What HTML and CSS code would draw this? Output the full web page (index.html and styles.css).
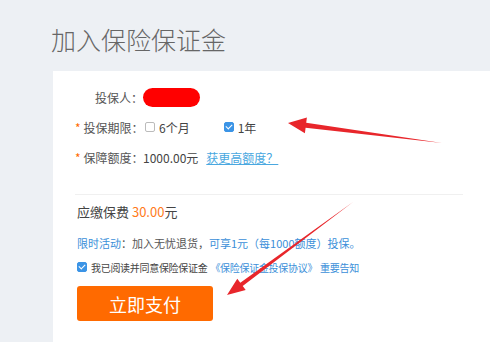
FILE: index.html
```html
<!DOCTYPE html>
<html lang="zh-CN">
  <head>
    <meta charset="UTF-8" />
    <title>加入保险保证金</title>
    <link rel="stylesheet" href="styles.css">
  </head>
  <body>
    <div class="page">
      <h1 class="title">加入保险保证金</h1>
      <div class="card">
        <div class="form-row">
          <span class="label">投保人：</span>
          <span class="masked"></span>
        </div>
        <div class="form-row">
          <span class="label"><i class="req">*</i>投保期限：</span>
          <span class="check"></span>
          <span class="opt">6个月</span>
          <span class="check checked gap"></span>
          <span class="opt">1年</span>
        </div>
        <div class="form-row">
          <span class="label"><i class="req">*</i>保障额度：</span>
          <span class="value">1000.00元</span>
          <a class="more-link" href="#">获更高额度？</a>
        </div>

        <div class="divider"></div>

        <div class="fee">应缴保费 <span class="price">30.00</span>元</div>
        <div class="promo">
          <span class="blue">限时活动</span>：加入无忧退货，<span class="blue">可享1元（每1000额度）投保。</span>
        </div>
        <div class="agree">
          <span class="check checked"></span>
          <span>我已阅读并同意保险保证金</span>
          <a class="blue" href="#">《保险保证金投保协议》</a>
          <a class="blue" href="#">重要告知</a>
        </div>
        <button class="pay-button">立即支付</button>
      </div>
    </div>

    <!-- annotation arrows on top of the screenshot -->
    <svg class="marks" width="490" height="342" viewBox="0 0 490 342">
      <polygon points="288,123 306.9,117.4 306.2,122.8 442,143 305.6,127.8 304.9,133.2" />
      <polygon points="227,295 245.7,289.9 242.7,285.9 353,202 240.3,282.7 237.3,278.7" />
    </svg>
  </body>
</html>
```

FILE: styles.css
```css
body {
  margin: 0;
  background-color: #edf0f4;
  font-family: "Noto Sans CJK SC", "Noto Sans", sans-serif;
  color: #555;
  overflow: hidden;
}

.page {
  padding-left: 53px;
}

.title {
  margin: 0 0 0 -2px;
  padding-top: 23px;
  height: 71px;
  box-sizing: border-box;
  font-size: 25px;
  line-height: 32px;
  font-weight: 300;
  color: #666;
}

.card {
  background-color: white;
  padding: 11px 27px 0 22px;
  min-height: 271px;
  box-sizing: border-box;
}

.form-row {
  display: flex;
  align-items: center;
  height: 30px;
  font-size: 12px;
  white-space: nowrap;
}

.label {
  width: 68px;
  flex-shrink: 0;
  text-align: right;
  color: #555;
}

.req {
  font-style: normal;
  color: #ff6a00;
  margin-right: 3px;
}

.masked {
  display: inline-block;
  width: 57px;
  height: 19px;
  border-radius: 10px;
  background-color: #f00;
}

.check {
  display: inline-block;
  width: 8px;
  height: 8px;
  border: 1px solid #bbb;
  border-radius: 2px;
  margin: 0 4px 0 2px;
  position: relative;
  flex-shrink: 0;
}

.check.checked {
  background-color: #3b94e6;
  border-color: #3b94e6;
}

.check.checked::after {
  content: "";
  position: absolute;
  left: 2px;
  top: 0px;
  width: 3px;
  height: 5px;
  border: solid white;
  border-width: 0 1.5px 1.5px 0;
  transform: rotate(45deg);
}

.check.gap {
  margin-left: 34px;
}

.opt,
.value {
  color: #444;
}

.more-link {
  margin-left: 8px;
  color: #4aa8e0;
  text-decoration: underline;
}

.divider {
  height: 1px;
  background-color: #f0f0f0;
  margin: 22px 0 7px 0;
}

.fee {
  font-size: 13px;
  line-height: 20px;
  color: #444;
  padding: 0 2px;
}

.price {
  color: #ff7a1a;
}

.promo {
  margin-top: 11px;
  font-size: 11px;
  line-height: 20px;
  color: #555;
  padding: 0 2px;
  white-space: nowrap;
}

.blue {
  color: #3b8fd9;
  text-decoration: none;
}

.agree {
  display: flex;
  align-items: center;
  gap: 3px;
  margin-top: 6px;
  font-size: 10px;
  letter-spacing: -0.3px;
  height: 16px;
  color: #444;
  padding-left: 2px;
  white-space: nowrap;
}

.agree .check {
  margin: 0 1px 0 0;
}

.pay-button {
  margin: 11px 0 0 2px;
  width: 136px;
  height: 35px;
  border: none;
  border-radius: 3px;
  background-color: #ff6a00;
  color: white;
  font-family: inherit;
  font-size: 18px;
  cursor: pointer;
}

.marks {
  position: absolute;
  left: 0;
  top: 0;
  pointer-events: none;
}

.marks polygon {
  fill: #e8262b;
}
```
